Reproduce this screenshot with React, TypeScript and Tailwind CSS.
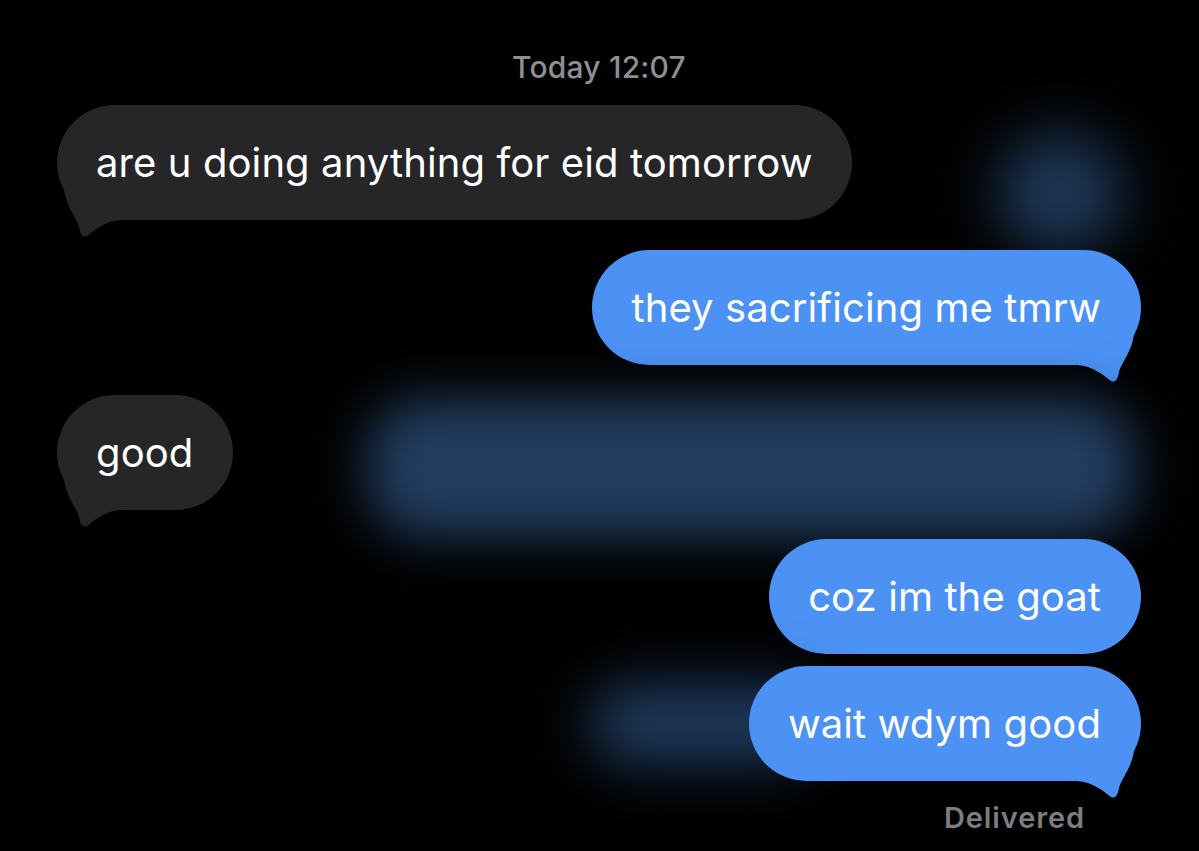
import React from 'react';

type Glow = 'none' | 'right' | 'wide' | 'left';
type Msg = { text: string; from: 'them' | 'me'; tail: boolean; gap: string; glow: Glow };

const messages: Msg[] = [
  { text: 'are u doing anything for eid tomorrow', from: 'them', tail: true, gap: 'mt-0', glow: 'right' },
  { text: 'they sacrificing me tmrw', from: 'me', tail: true, gap: 'mt-[30px]', glow: 'none' },
  { text: 'good', from: 'them', tail: true, gap: 'mt-[30px]', glow: 'wide' },
  { text: 'coz im the goat', from: 'me', tail: false, gap: 'mt-[29px]', glow: 'none' },
  { text: 'wait wdym good', from: 'me', tail: true, gap: 'mt-[12px]', glow: 'left' },
];

function Tail({ side, color }: { side: 'left' | 'right'; color: string }) {
  return (
    <svg
      viewBox="0 0 70 52"
      className={
        'absolute bottom-[-21px] w-[70px] h-[52px] ' +
        (side === 'left' ? 'left-0' : 'right-0 -scale-x-100')
      }
    >
      <path
        d="M7 0 C9 18 20 29 22 38 Q24 50 30 47 C38 41 48 32 64 31 L64 0 Z"
        fill={color}
      />
    </svg>
  );
}

function Bubble({ msg }: { msg: Msg }) {
  const mine = msg.from === 'me';
  const color = mine ? '#4b92f4' : '#262628';
  return (
    <div
      className={
        'relative shrink-0 h-[115px] rounded-[58px] flex items-center pl-[39px] pr-[40px] text-[40px] tracking-[0.1px] text-white whitespace-nowrap ' +
        (mine ? 'bg-[#4b92f4]' : 'bg-[#262628]')
      }
    >
      {msg.tail && <Tail side={mine ? 'right' : 'left'} color={color} />}
      <span className="relative">{msg.text}</span>
    </div>
  );
}

function Row({ msg }: { msg: Msg }) {
  const mine = msg.from === 'me';
  return (
    <div className={'flex h-[115px] items-start ' + (mine ? 'justify-end' : 'justify-start') + ' ' + msg.gap}>
      {msg.glow === 'left' && (
        <div className="shrink-0 mt-[18px] -mr-[70px] w-[230px] h-[80px] rounded-full bg-[#1f3a5e] blur-[28px]" />
      )}
      <Bubble msg={msg} />
      {msg.glow === 'right' && (
        <div className="shrink-0 ml-auto mr-[18px] mt-[28px] w-[126px] h-[120px] rounded-full bg-[#1e3859] blur-[30px]" />
      )}
      {msg.glow === 'wide' && (
        <div className="ml-auto mr-[6px] mt-[4px] w-[768px] h-[138px] rounded-[55px] bg-[#223d60] blur-[26px]" />
      )}
    </div>
  );
}

export default function App() {
  return (
    <div
      className="w-full h-[851px] bg-black overflow-hidden"
      style={{ fontFamily: 'Inter, "Noto Sans", sans-serif' }}
    >
      <div className="flex flex-col pl-[57px] pr-[58px] pt-[47px]">
        <div className="text-center text-[30px] font-medium tracking-[0.2px] text-[#8e8e93] leading-[40px] mb-[18px]">
          Today 12:07
        </div>
        {messages.map((m) => (
          <Row key={m.text} msg={m} />
        ))}
        <div className="flex justify-end pr-[56px] mt-[20px] text-[29px] font-semibold tracking-[0.9px] text-[#7d7d82] leading-[34px]">
          Delivered
        </div>
      </div>
    </div>
  );
}
